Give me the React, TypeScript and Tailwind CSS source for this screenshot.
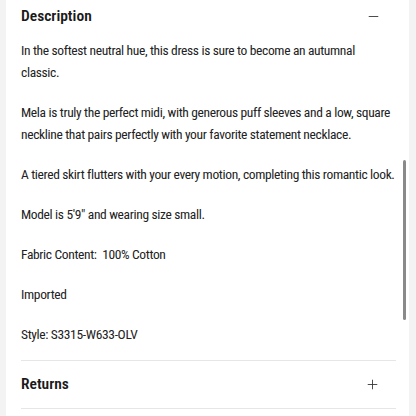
import { Minus, Plus } from "lucide-react";

// Accordion of product details: Description open, Returns closed
const paragraphs: string[][] = [
  ["In the softest neutral hue, this dress is sure to become an autumnal", "classic."],
  ["Mela is truly the perfect midi, with generous puff sleeves and a low, square", "neckline that pairs perfectly with your favorite statement necklace."],
  ["A tiered skirt flutters with your every motion, completing this romantic look."],
  ["Model is 5'9\" and wearing size small."],
  ["Fabric Content:\u00a0 100% Cotton"],
  ["Imported"],
  ["Style: S3315-W633-OLV"],
];

export default function App() {
  return (
    <div className="flex h-[416px] w-[416px] overflow-hidden bg-[#f3f3f3] font-[Roboto,sans-serif] font-stretch-condensed">
      <div className="relative ml-[6px] h-full w-[403px] bg-white">
        <div className="pl-[15px] pr-[13px]">
          {/* Description header */}
          <div className="flex h-[33px] items-center justify-between">
            <span className="text-[15.5px] font-semibold text-[#1a1a1a]">Description</span>
            <Minus className="mr-[15px] h-[15px] w-[15px] text-[#333]" strokeWidth={1.4} />
          </div>

          {/* Description body */}
          <div className="flex flex-col gap-[18px] pt-[6px] pb-[15px] text-[13.5px] leading-[22px] tracking-[-0.35px] text-[#222]">
            {paragraphs.map((lines, i) => (
              <p key={i}>
                {lines.map((line, j) => (
                  <span key={j} className="block whitespace-nowrap">
                    {line}
                  </span>
                ))}
              </p>
            ))}
          </div>

          {/* Returns header */}
          <div className="flex h-[49px] items-center justify-between border-y border-[#e6e6e6]">
            <span className="text-[15.5px] font-semibold text-[#1a1a1a]">Returns</span>
            <Plus className="mr-[16px] h-[15px] w-[15px] text-[#333]" strokeWidth={1.4} />
          </div>
        </div>

        {/* scrollbar thumb */}
        <div className="absolute right-[3px] top-[160px] h-[160px] w-[3px] rounded-full bg-[#8a8a8a]" />
      </div>
    </div>
  );
}
